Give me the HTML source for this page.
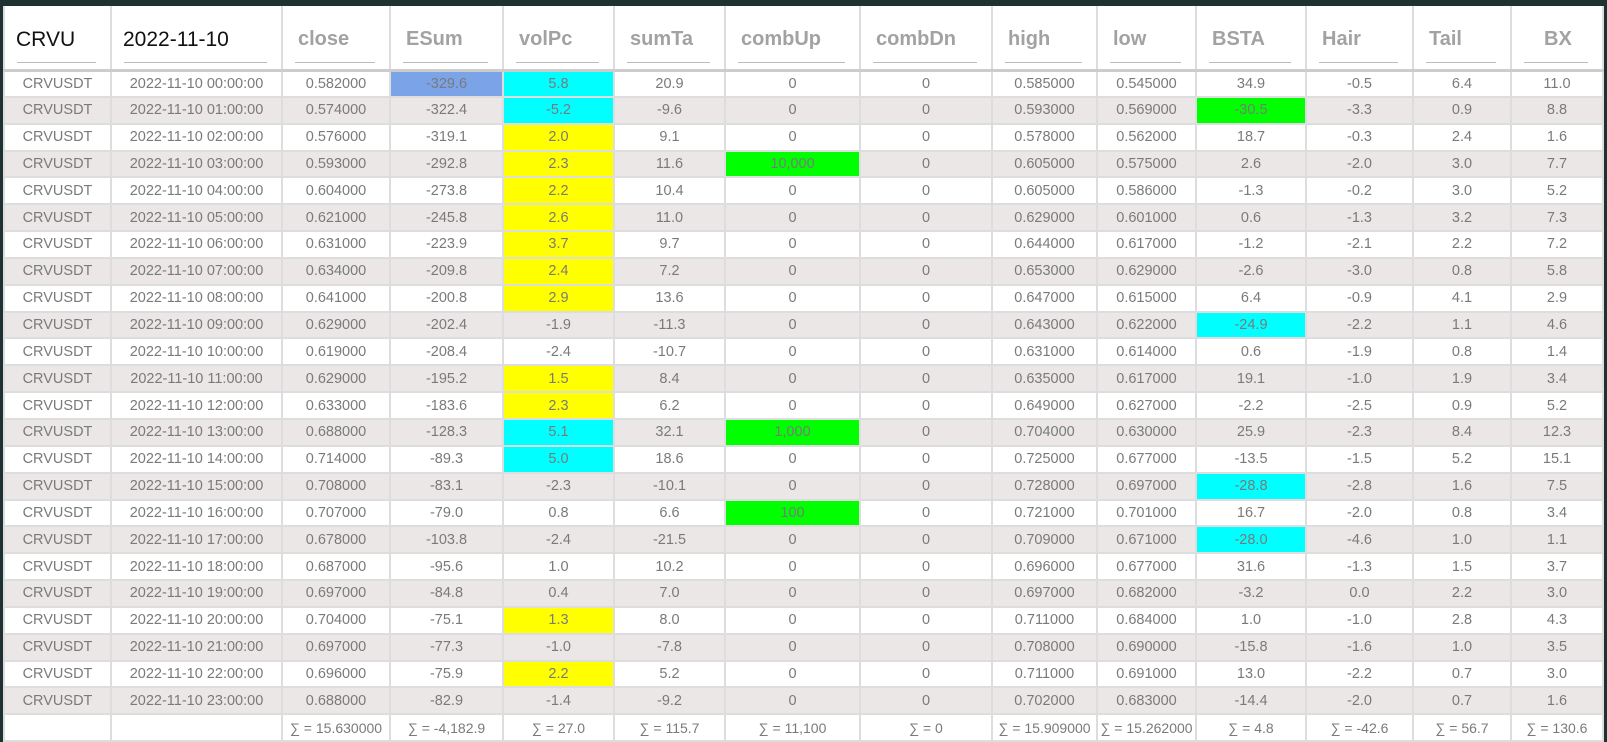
<!DOCTYPE html>
<html><head><meta charset="utf-8"><style>
body{margin:0;background:#1f3231;width:1607px;height:742px;overflow:hidden;font-family:"Liberation Sans",sans-serif}
table{position:absolute;left:3px;top:6px;border-collapse:collapse;table-layout:fixed;background:#fff}
td,th{border:2px solid #ddd;padding:0;text-align:center;color:#7a7a7a;font-size:14.5px;font-weight:normal;white-space:nowrap;overflow:hidden}
th{height:64px;text-align:left;border-top:none;border-bottom:3px solid #ccc;color:#a2a2a2;font-size:20px;font-weight:bold;position:relative;padding-left:15px;vertical-align:top;padding-top:22px;box-sizing:border-box}
th:after{content:"";position:absolute;left:12px;right:14px;top:56px;border-top:1px solid #bbb}
th.k{color:#111;font-weight:normal;font-size:21px;padding-left:11px}
tbody tr{height:26.85px}
tbody tr:nth-child(even) td{background:#ebe7e6}
tr.s td{height:22px;background:#fff!important;font-size:14px}
.b{background:#7ba3e8!important}.c{background:#00ffff!important}.y{background:#ffff00!important}.g{background:#00ff00!important}
</style></head><body>
<table>
<colgroup><col style="width:107px"><col style="width:171px"><col style="width:108px"><col style="width:113px"><col style="width:111px"><col style="width:111px"><col style="width:135px"><col style="width:132px"><col style="width:105px"><col style="width:99px"><col style="width:110px"><col style="width:107px"><col style="width:98px"><col style="width:92px"></colgroup>
<thead><tr><th class="k">CRVU</th><th class="k">2022-11-10</th><th>close</th><th>ESum</th><th>volPc</th><th>sumTa</th><th>combUp</th><th>combDn</th><th>high</th><th>low</th><th>BSTA</th><th>Hair</th><th>Tail</th><th style="padding-left:32px">BX</th></tr></thead>
<tbody>
<tr><td>CRVUSDT</td><td>2022-11-10 00:00:00</td><td>0.582000</td><td class="b">-329.6</td><td class="c">5.8</td><td>20.9</td><td>0</td><td>0</td><td>0.585000</td><td>0.545000</td><td>34.9</td><td>-0.5</td><td>6.4</td><td>11.0</td></tr>
<tr><td>CRVUSDT</td><td>2022-11-10 01:00:00</td><td>0.574000</td><td>-322.4</td><td class="c">-5.2</td><td>-9.6</td><td>0</td><td>0</td><td>0.593000</td><td>0.569000</td><td class="g">-30.5</td><td>-3.3</td><td>0.9</td><td>8.8</td></tr>
<tr><td>CRVUSDT</td><td>2022-11-10 02:00:00</td><td>0.576000</td><td>-319.1</td><td class="y">2.0</td><td>9.1</td><td>0</td><td>0</td><td>0.578000</td><td>0.562000</td><td>18.7</td><td>-0.3</td><td>2.4</td><td>1.6</td></tr>
<tr><td>CRVUSDT</td><td>2022-11-10 03:00:00</td><td>0.593000</td><td>-292.8</td><td class="y">2.3</td><td>11.6</td><td class="g">10,000</td><td>0</td><td>0.605000</td><td>0.575000</td><td>2.6</td><td>-2.0</td><td>3.0</td><td>7.7</td></tr>
<tr><td>CRVUSDT</td><td>2022-11-10 04:00:00</td><td>0.604000</td><td>-273.8</td><td class="y">2.2</td><td>10.4</td><td>0</td><td>0</td><td>0.605000</td><td>0.586000</td><td>-1.3</td><td>-0.2</td><td>3.0</td><td>5.2</td></tr>
<tr><td>CRVUSDT</td><td>2022-11-10 05:00:00</td><td>0.621000</td><td>-245.8</td><td class="y">2.6</td><td>11.0</td><td>0</td><td>0</td><td>0.629000</td><td>0.601000</td><td>0.6</td><td>-1.3</td><td>3.2</td><td>7.3</td></tr>
<tr><td>CRVUSDT</td><td>2022-11-10 06:00:00</td><td>0.631000</td><td>-223.9</td><td class="y">3.7</td><td>9.7</td><td>0</td><td>0</td><td>0.644000</td><td>0.617000</td><td>-1.2</td><td>-2.1</td><td>2.2</td><td>7.2</td></tr>
<tr><td>CRVUSDT</td><td>2022-11-10 07:00:00</td><td>0.634000</td><td>-209.8</td><td class="y">2.4</td><td>7.2</td><td>0</td><td>0</td><td>0.653000</td><td>0.629000</td><td>-2.6</td><td>-3.0</td><td>0.8</td><td>5.8</td></tr>
<tr><td>CRVUSDT</td><td>2022-11-10 08:00:00</td><td>0.641000</td><td>-200.8</td><td class="y">2.9</td><td>13.6</td><td>0</td><td>0</td><td>0.647000</td><td>0.615000</td><td>6.4</td><td>-0.9</td><td>4.1</td><td>2.9</td></tr>
<tr><td>CRVUSDT</td><td>2022-11-10 09:00:00</td><td>0.629000</td><td>-202.4</td><td>-1.9</td><td>-11.3</td><td>0</td><td>0</td><td>0.643000</td><td>0.622000</td><td class="c">-24.9</td><td>-2.2</td><td>1.1</td><td>4.6</td></tr>
<tr><td>CRVUSDT</td><td>2022-11-10 10:00:00</td><td>0.619000</td><td>-208.4</td><td>-2.4</td><td>-10.7</td><td>0</td><td>0</td><td>0.631000</td><td>0.614000</td><td>0.6</td><td>-1.9</td><td>0.8</td><td>1.4</td></tr>
<tr><td>CRVUSDT</td><td>2022-11-10 11:00:00</td><td>0.629000</td><td>-195.2</td><td class="y">1.5</td><td>8.4</td><td>0</td><td>0</td><td>0.635000</td><td>0.617000</td><td>19.1</td><td>-1.0</td><td>1.9</td><td>3.4</td></tr>
<tr><td>CRVUSDT</td><td>2022-11-10 12:00:00</td><td>0.633000</td><td>-183.6</td><td class="y">2.3</td><td>6.2</td><td>0</td><td>0</td><td>0.649000</td><td>0.627000</td><td>-2.2</td><td>-2.5</td><td>0.9</td><td>5.2</td></tr>
<tr><td>CRVUSDT</td><td>2022-11-10 13:00:00</td><td>0.688000</td><td>-128.3</td><td class="c">5.1</td><td>32.1</td><td class="g">1,000</td><td>0</td><td>0.704000</td><td>0.630000</td><td>25.9</td><td>-2.3</td><td>8.4</td><td>12.3</td></tr>
<tr><td>CRVUSDT</td><td>2022-11-10 14:00:00</td><td>0.714000</td><td>-89.3</td><td class="c">5.0</td><td>18.6</td><td>0</td><td>0</td><td>0.725000</td><td>0.677000</td><td>-13.5</td><td>-1.5</td><td>5.2</td><td>15.1</td></tr>
<tr><td>CRVUSDT</td><td>2022-11-10 15:00:00</td><td>0.708000</td><td>-83.1</td><td>-2.3</td><td>-10.1</td><td>0</td><td>0</td><td>0.728000</td><td>0.697000</td><td class="c">-28.8</td><td>-2.8</td><td>1.6</td><td>7.5</td></tr>
<tr><td>CRVUSDT</td><td>2022-11-10 16:00:00</td><td>0.707000</td><td>-79.0</td><td>0.8</td><td>6.6</td><td class="g">100</td><td>0</td><td>0.721000</td><td>0.701000</td><td>16.7</td><td>-2.0</td><td>0.8</td><td>3.4</td></tr>
<tr><td>CRVUSDT</td><td>2022-11-10 17:00:00</td><td>0.678000</td><td>-103.8</td><td>-2.4</td><td>-21.5</td><td>0</td><td>0</td><td>0.709000</td><td>0.671000</td><td class="c">-28.0</td><td>-4.6</td><td>1.0</td><td>1.1</td></tr>
<tr><td>CRVUSDT</td><td>2022-11-10 18:00:00</td><td>0.687000</td><td>-95.6</td><td>1.0</td><td>10.2</td><td>0</td><td>0</td><td>0.696000</td><td>0.677000</td><td>31.6</td><td>-1.3</td><td>1.5</td><td>3.7</td></tr>
<tr><td>CRVUSDT</td><td>2022-11-10 19:00:00</td><td>0.697000</td><td>-84.8</td><td>0.4</td><td>7.0</td><td>0</td><td>0</td><td>0.697000</td><td>0.682000</td><td>-3.2</td><td>0.0</td><td>2.2</td><td>3.0</td></tr>
<tr><td>CRVUSDT</td><td>2022-11-10 20:00:00</td><td>0.704000</td><td>-75.1</td><td class="y">1.3</td><td>8.0</td><td>0</td><td>0</td><td>0.711000</td><td>0.684000</td><td>1.0</td><td>-1.0</td><td>2.8</td><td>4.3</td></tr>
<tr><td>CRVUSDT</td><td>2022-11-10 21:00:00</td><td>0.697000</td><td>-77.3</td><td>-1.0</td><td>-7.8</td><td>0</td><td>0</td><td>0.708000</td><td>0.690000</td><td>-15.8</td><td>-1.6</td><td>1.0</td><td>3.5</td></tr>
<tr><td>CRVUSDT</td><td>2022-11-10 22:00:00</td><td>0.696000</td><td>-75.9</td><td class="y">2.2</td><td>5.2</td><td>0</td><td>0</td><td>0.711000</td><td>0.691000</td><td>13.0</td><td>-2.2</td><td>0.7</td><td>3.0</td></tr>
<tr><td>CRVUSDT</td><td>2022-11-10 23:00:00</td><td>0.688000</td><td>-82.9</td><td>-1.4</td><td>-9.2</td><td>0</td><td>0</td><td>0.702000</td><td>0.683000</td><td>-14.4</td><td>-2.0</td><td>0.7</td><td>1.6</td></tr>
<tr class="s"><td></td><td></td><td>∑ = 15.630000</td><td>∑ = -4,182.9</td><td>∑ = 27.0</td><td>∑ = 115.7</td><td>∑ = 11,100</td><td>∑ = 0</td><td>∑ = 15.909000</td><td>∑ = 15.262000</td><td>∑ = 4.8</td><td>∑ = -42.6</td><td>∑ = 56.7</td><td>∑ = 130.6</td></tr>
</tbody></table>
</body></html>
